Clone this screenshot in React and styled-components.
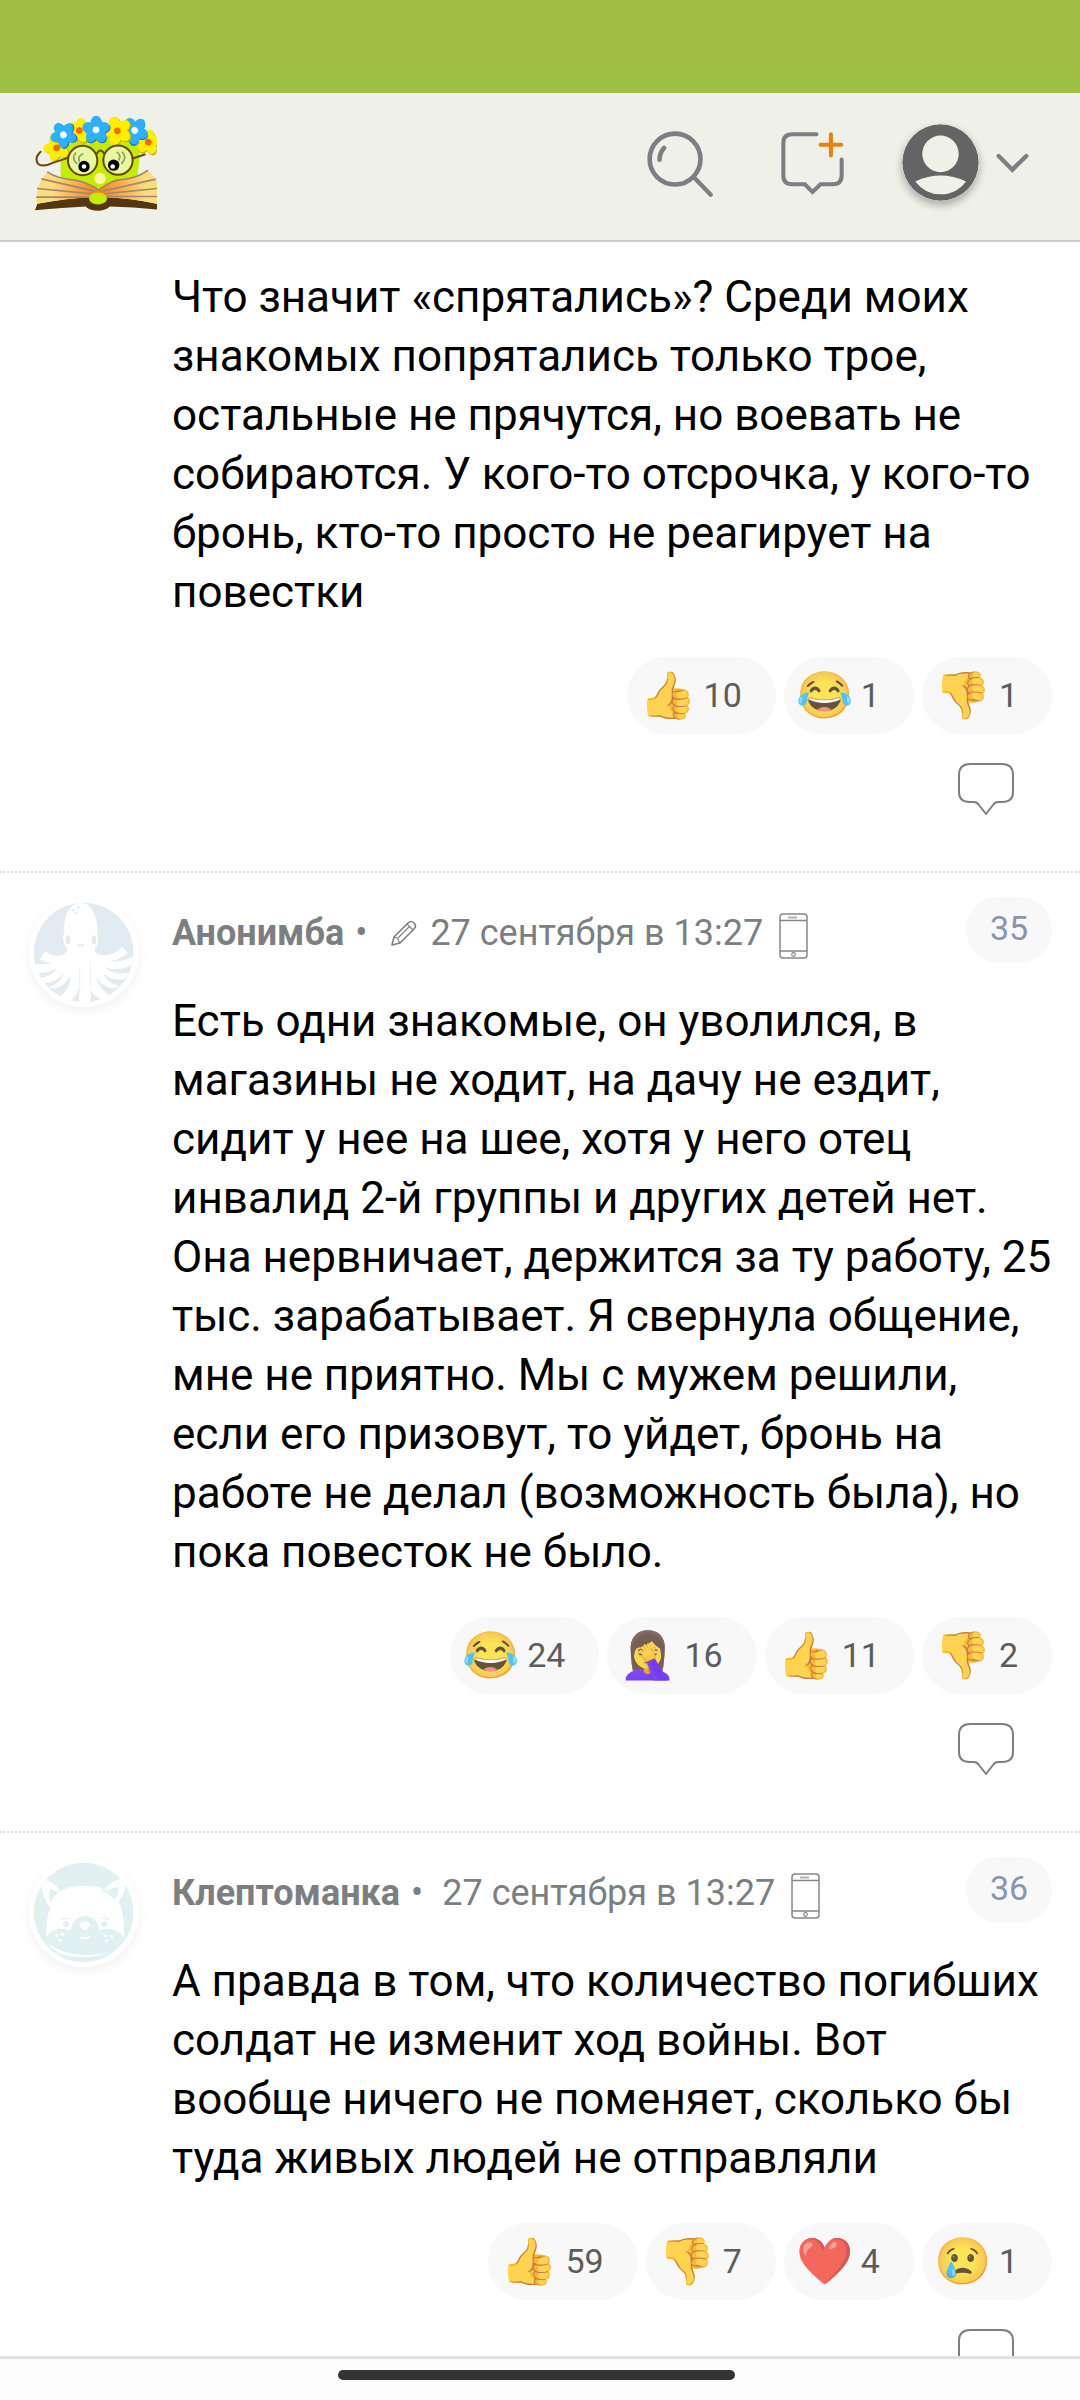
import React from 'react'
import styled, { createGlobalStyle } from 'styled-components'

const GlobalStyle = createGlobalStyle`
    * {
        box-sizing: border-box;
    }
    body {
        margin: 0;
        background-color: #fff;
        font-family: Roboto, 'Noto Sans', sans-serif;
    }
    button {
        display: flex;
        align-items: center;
        margin: 0;
        padding: 0;
        border: 0;
        background: none;
        font: inherit;
        cursor: pointer;
    }
    svg {
        display: block;
        flex: none;
    }
`

const Page = styled.div`
    display: flex;
    flex-direction: column;
    height: 100vh;
`

const StatusBar = styled.div`
    flex: none;
    height: 93px;
    background-color: #9ebf43;
`

const Header = styled.header`
    flex: none;
    display: flex;
    align-items: center;
    height: 149px;
    padding: 0 51px 8px 35px;
    border-bottom: 2px solid #ccc;
    background-color: #eff0e8;
`

const Logo = styled.a`
    margin-right: auto;
`

const HeaderButton = styled.button`
    margin-left: ${(props) => props.$gap}px;
    padding-top: ${(props) => props.$drop}px;
`

const UserIcon = styled.svg`
    margin-right: 17px;
    border-radius: 50%;
    box-shadow: 0 4px 8px rgba(0, 0, 0, 0.3);
`

const Feed = styled.main`
    flex: 1;
    min-height: 0;
    overflow-y: auto;
    scrollbar-width: none;
`

const Comment = styled.article`
    display: flex;
    padding: 24px 28px 56px 29px;
    border-top: 2px dotted #ddd;

    &:first-child {
        padding-top: 26px;
        border-top: 0;
    }
`

const Side = styled.div`
    flex: none;
    width: 143px;
`

const Avatar = styled.svg`
    border-radius: 50%;
    box-shadow: 0 4px 12px rgba(0, 0, 0, 0.06);
`

const Body = styled.div`
    flex: 1;
    min-width: 0;
`

const Meta = styled.div`
    display: flex;
    justify-content: space-between;
    margin-bottom: 29px;
`

const MetaInfo = styled.div`
    display: flex;
    align-items: center;
    padding-top: 6px;
    font-size: 36px;
    line-height: 42px;
    color: #7b7f82;
`

const Dot = styled.span`
    margin: 0 19px 0 11px;
`

const EditIcon = styled.svg`
    margin: 0 13px 0 5px;
`

const PhoneIcon = styled.svg`
    margin: 6px 0 0 16px;
`

const Num = styled.a`
    width: 86px;
    height: 66px;
    border-radius: 33px;
    background-color: #f8f8f8;
    font-size: 34px;
    line-height: 62px;
    text-align: center;
    text-decoration: none;
    color: #8a94ad;
`

const Text = styled.p`
    margin: 0 0 35px;
    font-size: 44px;
    line-height: 59px;
    color: #000;
`

const Reactions = styled.div`
    display: flex;
    justify-content: flex-end;
    gap: 8px;
    margin-bottom: 29px;
`

const Reaction = styled.button`
    gap: 8px;
    height: 77px;
    padding: 0 34px 2px 12px;
    border-radius: 39px;
    background-color: #f8f8f8;
    font-size: 34px;
    line-height: 40px;
    color: #5c5c5c;
`

const Emoji = styled.span`
    font-size: 46px;
    line-height: 54px;
    opacity: 0.8;
`

const Reply = styled.button`
    margin: 0 38px 0 auto;
`

const NavBar = styled.footer`
    flex: none;
    display: flex;
    justify-content: center;
    height: 44px;
    padding: 11px 7px 0 0;
    border-top: 3px solid #e0e1df;
    background-color: #fdfdfd;
`

const NavHandle = styled.div`
    width: 37%;
    height: 10px;
    border-radius: 5px;
    background-color: #333;
`

const Flower = ({ x, y, turn, r, color, shade, core }) => (
    <g transform={`translate(${x} ${y}) rotate(${turn})`}>
        {[0, 72, 144, 216, 288].map((a) => (
            <ellipse key={'s' + a} cx="0" cy={-r - 2} rx={r - 4} ry={r + 1} fill={shade} transform={`translate(2 3) rotate(${a})`} />
        ))}
        {[0, 72, 144, 216, 288].map((a) => (
            <ellipse key={a} cx="0" cy={-r - 2} rx={r - 4} ry={r} fill={color} transform={`rotate(${a})`} />
        ))}
        <circle r="10" fill={core} />
    </g>
)

const yellow = { color: '#ffee00', shade: '#c9a800', core: '#ff6600' }
const blue = { color: '#2fb0ff', shade: '#1878c8', core: '#fff' }

const LogoArt = () => (
    <svg width="122" height="96" viewBox="105 100 366 287">
        <defs>
            <radialGradient id="pages" gradientUnits="userSpaceOnUse" cx="296" cy="330" r="140">
                <stop offset="0" stopColor="#ff7a1c" />
                <stop offset="1" stopColor="#fbdc80" />
            </radialGradient>
        </defs>
        <path d="M186 180 Q180 240 182 300 L296 330 L410 300 Q420 240 420 180 Q300 150 186 180Z" fill="#c3ec00" />
        <path d="M105 385 L112 366 Q200 348 268 346 L324 346 Q400 350 471 366 V383 Q400 376 330 374 Q314 387 294 387 Q270 387 257 374 Q190 378 105 385Z" fill="#55370f" />
        <path d="M142 270 Q170 290 225 295 Q262 302 296 324 Q330 300 352 295 Q410 292 444 265 Q460 280 471 300 V366 Q400 350 324 346 H268 Q200 350 110 366 Q104 310 142 270Z" fill="url(#pages)" />
        <g fill="none" stroke="#a08a6c" strokeWidth="5">
            <path d="M142 270 Q170 290 225 295 Q262 302 296 324 Q330 300 352 295 Q410 292 444 265" />
            <path d="M124 291 L284 328 M111 320 L280 336 M109 346 H272 M468 292 L308 328 M471 320 L312 336 M471 344 H320" />
        </g>
        <ellipse cx="294" cy="350" rx="27" ry="18" fill="#c3ec00" />
        <circle cx="300" cy="290" r="17" fill="#fff3a0" />
        <Flower x={170} y={198} turn={-20} {...yellow} r={19} />
        <Flower x={445} y={181} turn={10} {...yellow} r={18} />
        <Flower x={238} y={146} turn={10} {...yellow} r={18} />
        <Flower x={404} y={146} turn={40} {...blue} r={20} />
        <Flower x={352} y={147} turn={-20} {...yellow} r={21} />
        <Flower x={190} y={159} turn={-35} {...blue} r={19} />
        <Flower x={288} y={144} turn={0} {...blue} r={20} />
        <g fill="#e6f8a0" stroke="#6b450b" strokeWidth="6">
            <circle cx="248" cy="236" r="44" />
            <circle cx="354" cy="235" r="44" />
        </g>
        <g fill="none" stroke="#6b450b" strokeWidth="6" strokeLinecap="round">
            <path d="M290 216 Q301 196 313 216" />
            <path d="M204 228 Q180 236 158 243 Q128 258 114 246 Q102 228 122 210" />
            <path d="M398 230 L434 218" />
        </g>
        <g fill="none" stroke="#8d9a5a" strokeWidth="5">
            <path d="M228 212 Q212 230 232 246 M250 216 Q232 222 238 240" />
            <path d="M366 210 Q384 226 364 246 M350 210 Q366 220 356 236" />
        </g>
        <circle cx="252" cy="254" r="17" fill="#000" />
        <circle cx="252" cy="254" r="7" fill="#fff" />
        <circle cx="341" cy="250" r="17" fill="#000" />
        <circle cx="338" cy="254" r="7" fill="#fff" />
    </svg>
)

const OctopusAvatar = () => (
    <Avatar width="110" height="110" viewBox="15 18 330 330" aria-hidden="true">
        <defs>
            <clipPath id="octopus">
                <circle cx="179" cy="184" r="149" />
            </clipPath>
        </defs>
        <rect x="15" y="18" width="330" height="330" fill="#fff" />
        <g clipPath="url(#octopus)">
            <rect x="15" y="18" width="330" height="330" fill="#e2ebf1" />
            <path
                fill="#fff"
                d="M169 36 C134 38 118 78 121 124 C114 138 118 164 131 172 C128 196 96 204 62 181 L48 206 Q66 216 84 216 Q58 222 30 219 L34 246 Q70 248 98 232 Q84 256 46 262 Q54 276 66 276 Q100 272 118 246 Q112 278 74 288 Q88 294 100 291 Q128 278 138 256 Q142 296 104 318 Q124 330 144 326 Q164 306 166 286 Q164 306 166 340 H196 Q204 316 198 290 Q208 318 236 326 L258 314 Q222 290 216 254 Q228 286 268 292 L286 286 Q250 276 236 246 Q262 272 300 264 L314 246 Q268 252 240 228 Q284 244 322 222 L330 196 Q290 216 258 210 Q290 206 310 186 L294 168 Q256 206 214 186 L213 172 Q226 160 220 126 C222 80 204 34 169 36Z"
            />
            <g fill="#e2ebf1">
                <circle cx="148" cy="58" r="4" />
                <circle cx="163" cy="50" r="4" />
                <circle cx="157" cy="67" r="4" />
                <ellipse cx="132" cy="146" rx="7" ry="13" />
                <ellipse cx="210" cy="146" rx="7" ry="13" />
                <circle cx="166" cy="163" r="4" />
                <circle cx="175" cy="163" r="4" />
            </g>
            <g fill="none" stroke="#e2ebf1" strokeWidth="2">
                <path d="M167 232 V310 M199 208 V286" />
                <path d="M174 240 V316 M82 246 Q106 244 120 230 M118 294 Q140 276 144 252 M214 230 Q222 250 246 260" strokeDasharray="2 6" />
            </g>
        </g>
    </Avatar>
)

const CatAvatar = () => (
    <Avatar width="110" height="110" viewBox="15 18 330 330" aria-hidden="true">
        <defs>
            <clipPath id="cat">
                <circle cx="179" cy="184" r="149" />
            </clipPath>
        </defs>
        <rect x="15" y="18" width="330" height="330" fill="#fff" />
        <g clipPath="url(#cat)">
            <rect x="15" y="18" width="330" height="330" fill="#e1f0f0" />
            <path
                fill="#fff"
                d="M54 84 Q88 88 108 120 Q140 104 182 104 Q216 104 240 114 Q262 88 303 80 Q310 118 284 152 Q302 188 300 262 Q290 238 256 233 Q232 234 226 236 Q222 200 184 195 Q146 198 140 238 Q128 234 104 233 Q72 240 66 262 Q66 194 80 172 Q50 138 54 84Z"
            />
            <g fill="#e1f0f0">
                <path d="M80 114 Q94 118 102 126 Q88 136 80 152 Q72 132 80 114Z" />
                <path d="M252 118 Q268 108 282 108 Q284 126 276 140 Q266 128 252 118Z" />
                <path d="M232 114 Q264 120 276 140 L268 144 Q256 128 232 118Z" />
                <circle cx="126" cy="220" r="9" />
                <circle cx="240" cy="220" r="9" />
            </g>
            <g fill="none" stroke="#e1f0f0" strokeWidth="4" strokeLinecap="round">
                <path d="M113 204 Q122 200 132 204 M234 202 Q246 200 254 206" />
            </g>
            <path d="M165 222 Q170 211 183 211 Q196 212 200 222 Q194 230 186 236 H179 Q170 230 165 222Z" fill="#fff" />
            <path d="M166 256 Q183 262 200 254 Q198 264 183 265 Q168 264 166 256Z" fill="#fff" />
            <g fill="#fff">
                <circle cx="98" cy="254" r="5" />
                <circle cx="115" cy="250" r="5" />
                <circle cx="109" cy="269" r="4" />
                <circle cx="245" cy="254" r="4" />
                <circle cx="262" cy="257" r="5" />
                <circle cx="248" cy="269" r="5" />
            </g>
            <path d="M68 276 Q120 312 180 312 Q222 312 254 304 Q214 320 174 319 Q102 318 68 276Z" fill="#fff" />
        </g>
    </Avatar>
)

const Pencil = () => (
    <EditIcon width="26" height="26" viewBox="0 0 26 26" fill="none" stroke="#7b7f82" strokeWidth="1.6" strokeLinejoin="round" aria-hidden="true">
        <path d="M1 25 L3 17 L17 3 Q20 0 23 3 Q26 6 23 9 L9 23 Z" />
        <path d="M3 17 L6 18 L9 23 M16 4 L22 10 M7 18 L18 7" strokeWidth="1.2" />
    </EditIcon>
)

const Phone = () => (
    <PhoneIcon width="29" height="46" viewBox="0 0 29 46" fill="none" stroke="#85888b" aria-hidden="true">
        <rect x="1" y="1" width="27" height="44" rx="3" strokeWidth="1.5" />
        <path d="M1 7.5 H28 M1 38 H28" strokeWidth="1.3" />
        <path d="M9 4.5 H18" strokeWidth="2" stroke="#b0b2b4" />
        <circle cx="14.5" cy="41.5" r="1.8" strokeWidth="1.2" />
    </PhoneIcon>
)

const ReplyIcon = () => (
    <svg width="56" height="52" viewBox="0 0 56 52" fill="none" stroke="#7b7f82" strokeWidth="2" strokeLinejoin="round">
        <path d="M12 1 H44 Q55 1 55 12 V29 Q55 39 44 39 H40 Q37 39 35 42 L28 51 L21 42 Q19 39 16 39 H12 Q1 39 1 29 V12 Q1 1 12 1Z" />
    </svg>
)

const comments = [
    {
        text: 'Что значит «спрятались»? Среди моих знакомых попрятались только трое, остальные не прячутся, но воевать не собираются. У кого-то отсрочка, у кого-то бронь, кто-то просто не реагирует на повестки',
        reactions: [['👍', 10], ['😂', 1], ['👎', 1]],
    },
    {
        num: 35,
        author: 'Анонимба',
        avatar: <OctopusAvatar />,
        edited: true,
        date: '27 сентября в 13:27',
        text: 'Есть одни знакомые, он уволился, в магазины не ходит, на дачу не ездит, сидит у нее на шее, хотя у него отец инвалид 2-й группы и других детей нет. Она нервничает, держится за ту работу, 25 тыс. зарабатывает. Я свернула общение, мне не приятно. Мы с мужем решили, если его призовут, то уйдет, бронь на работе не делал (возможность была), но пока повесток не было.',
        reactions: [['😂', 24], ['🤦‍♀️', 16], ['👍', 11], ['👎', 2]],
    },
    {
        num: 36,
        author: 'Клептоманка',
        avatar: <CatAvatar />,
        date: '27 сентября в 13:27',
        text: 'А правда в том, что количество погибших солдат не изменит ход войны. Вот вообще ничего не поменяет, сколько бы туда живых людей не отправляли',
        reactions: [['👍', 59], ['👎', 7], ['❤️', 4], ['😢', 1]],
    },
]

const App = () => {
    return (
        <Page>
            <GlobalStyle />
            <StatusBar />
            <Header>
                <Logo href="#" aria-label="Главная"><LogoArt /></Logo>
                <HeaderButton $gap={0} $drop={2} aria-label="Поиск">
                    <svg width="66" height="66" viewBox="140 152 200 200" fill="none" stroke="#7b7f82" strokeLinecap="round">
                        <circle cx="225" cy="237" r="77" strokeWidth="14" />
                        <path d="M282 292 L333 345" strokeWidth="13" />
                        <path d="M192 203 Q178 218 178 239" strokeWidth="14" />
                    </svg>
                </HeaderButton>
                <HeaderButton $gap={68} $drop={2} aria-label="Новая тема">
                    <svg width="63" height="63" viewBox="542 158 188 188" fill="none" stroke="#7b7f82" strokeWidth="12" strokeLinecap="round">
                        <path d="M648 165 H575 Q549 165 549 191 V288 Q549 314 575 314 H613 L636 337 L660 314 H697 Q723 314 723 288 V240" />
                        <path d="M691 165 V228 M660 196 H722" stroke="#ee7f0e" />
                    </svg>
                </HeaderButton>
                <HeaderButton $gap={58} $drop={0} aria-label="Профиль">
                    <UserIcon width="77" height="77" viewBox="905 131 232 232">
                        <circle cx="1021" cy="247" r="115" fill="#646464" />
                        <circle cx="1021" cy="221" r="55" fill="#eff0e8" />
                        <path d="M945 304 Q1021 268 1098 304 Q1068 343 1021 343 Q975 343 945 304Z" fill="#eff0e8" />
                    </UserIcon>
                    <svg width="33" height="20" viewBox="1188 217 99 60" fill="none" stroke="#7b7f82" strokeWidth="13" strokeLinecap="round">
                        <path d="M1196 226 L1237 267 L1279 226" />
                    </svg>
                </HeaderButton>
            </Header>
            <Feed>
                {comments.map((comment, i) => (
                    <Comment key={i}>
                        <Side>{comment.avatar}</Side>
                        <Body>
                            {comment.author && (
                                <Meta>
                                    <MetaInfo>
                                        <b>{comment.author}</b>
                                        <Dot>•</Dot>
                                        {comment.edited && <Pencil />}
                                        <span>{comment.date}</span>
                                        <Phone />
                                    </MetaInfo>
                                    <Num href="#">{comment.num}</Num>
                                </Meta>
                            )}
                            <Text>{comment.text}</Text>
                            <Reactions>
                                {comment.reactions.map(([emoji, count]) => (
                                    <Reaction key={emoji}>
                                        <Emoji>{emoji}</Emoji>
                                        <span>{count}</span>
                                    </Reaction>
                                ))}
                            </Reactions>
                            <Reply aria-label="Ответить"><ReplyIcon /></Reply>
                        </Body>
                    </Comment>
                ))}
            </Feed>
            <NavBar>
                <NavHandle />
            </NavBar>
        </Page>
    )
}

export default App
